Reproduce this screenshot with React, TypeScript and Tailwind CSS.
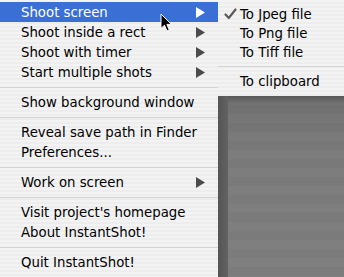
import React from "react";

const font = { fontFamily: '"DejaVu Sans", "Lucida Grande", sans-serif' };

function Tri({ white }: { white?: boolean }) {
  return (
    <svg width="9" height="11" viewBox="0 0 9 11" className="block">
      <path d="M0 0 L9 5.5 L0 11 Z" fill={white ? "#ffffff" : "#4b4b4b"} />
    </svg>
  );
}

function Row({
  label,
  sub,
  active,
}: {
  label: string;
  sub?: boolean;
  active?: boolean;
}) {
  return (
    <div
      className={
        "flex h-[20px] items-center pl-[21px] pr-[13px] " +
        (active ? "bg-[#3a6fd5] text-white" : "text-black")
      }
    >
      <span className="relative top-[1px] flex-1 leading-none">{label}</span>
      {sub && <Tri white={active} />}
    </div>
  );
}

function Sep() {
  return (
    <div className="flex h-[10px] items-center">
      <div className="h-px w-full bg-[#d4d4d4]" />
    </div>
  );
}

function Check() {
  return (
    <svg width="13" height="12" viewBox="0 0 13 12" className="block">
      <path
        d="M1.5 6.5 L4.8 10 L11.5 1.5"
        fill="none"
        stroke="#5a5a5a"
        strokeWidth="2.2"
        strokeLinecap="round"
        strokeLinejoin="round"
      />
    </svg>
  );
}

function SubRow({ label, checked }: { label: string; checked?: boolean }) {
  return (
    <div className="flex h-[19px] items-center text-black">
      <span className="flex w-[22px] justify-start pl-[6px]">
        {checked ? <Check /> : null}
      </span>
      <span className="relative top-[1px] leading-none">{label}</span>
    </div>
  );
}

const stripes =
  "bg-[repeating-linear-gradient(180deg,#f3f3f3_0px,#f3f3f3_2px,#ededed_2px,#ededed_4px)]";

export default function App() {
  return (
    <div
      className="relative flex h-[277px] w-[344px] overflow-hidden text-[13.3px]"
      style={font}
    >
      <div className={"w-[218px] shrink-0 pt-[2px] " + stripes}>
        <Row label="Shoot screen" sub active />
        <Row label="Shoot inside a rect" sub />
        <Row label="Shoot with timer" sub />
        <Row label="Start multiple shots" sub />
        <Sep />
        <Row label="Show background window" />
        <Sep />
        <Row label="Reveal save path in Finder" />
        <Row label="Preferences..." />
        <Sep />
        <Row label="Work on screen" sub />
        <Sep />
        <Row label="Visit project's homepage" />
        <Row label="About InstantShot!" />
        <Sep />
        <Row label="Quit InstantShot!" />
      </div>
      <div className="flex flex-1 flex-col">
        <div className={"h-[96px] shrink-0 pt-[4px] " + stripes}>
          <SubRow label="To Jpeg file" checked />
          <SubRow label="To Png file" />
          <SubRow label="To Tiff file" />
          <div className="flex h-[10px] items-center">
            <div className="h-px w-full bg-[#d4d4d4]" />
          </div>
          <SubRow label="To clipboard" />
        </div>
        <div className="flex flex-1">
          <div className="w-[10px] bg-[linear-gradient(90deg,#555555,#626262)]" />
          <div className="flex-1 bg-[linear-gradient(180deg,#555555_0px,#727272_8px,#7b7b7b_60px,#7e7e7e_100%)]">
            <div className="h-full w-full bg-[repeating-linear-gradient(180deg,rgba(255,255,255,0.015)_0px,rgba(255,255,255,0.015)_9px,rgba(0,0,0,0.015)_9px,rgba(0,0,0,0.015)_18px)]" />
          </div>
        </div>
      </div>
      <svg
        className="absolute left-[160px] top-[13px]"
        width="13"
        height="20"
        viewBox="0 0 13 20"
      >
        <path
          d="M1 1 L1 15.5 L4.5 12.2 L7 18 L9.3 17 L6.9 11.4 L11.5 11.4 Z"
          fill="#000"
          stroke="#fff"
          strokeWidth="1"
          strokeLinejoin="round"
        />
      </svg>
    </div>
  );
}
